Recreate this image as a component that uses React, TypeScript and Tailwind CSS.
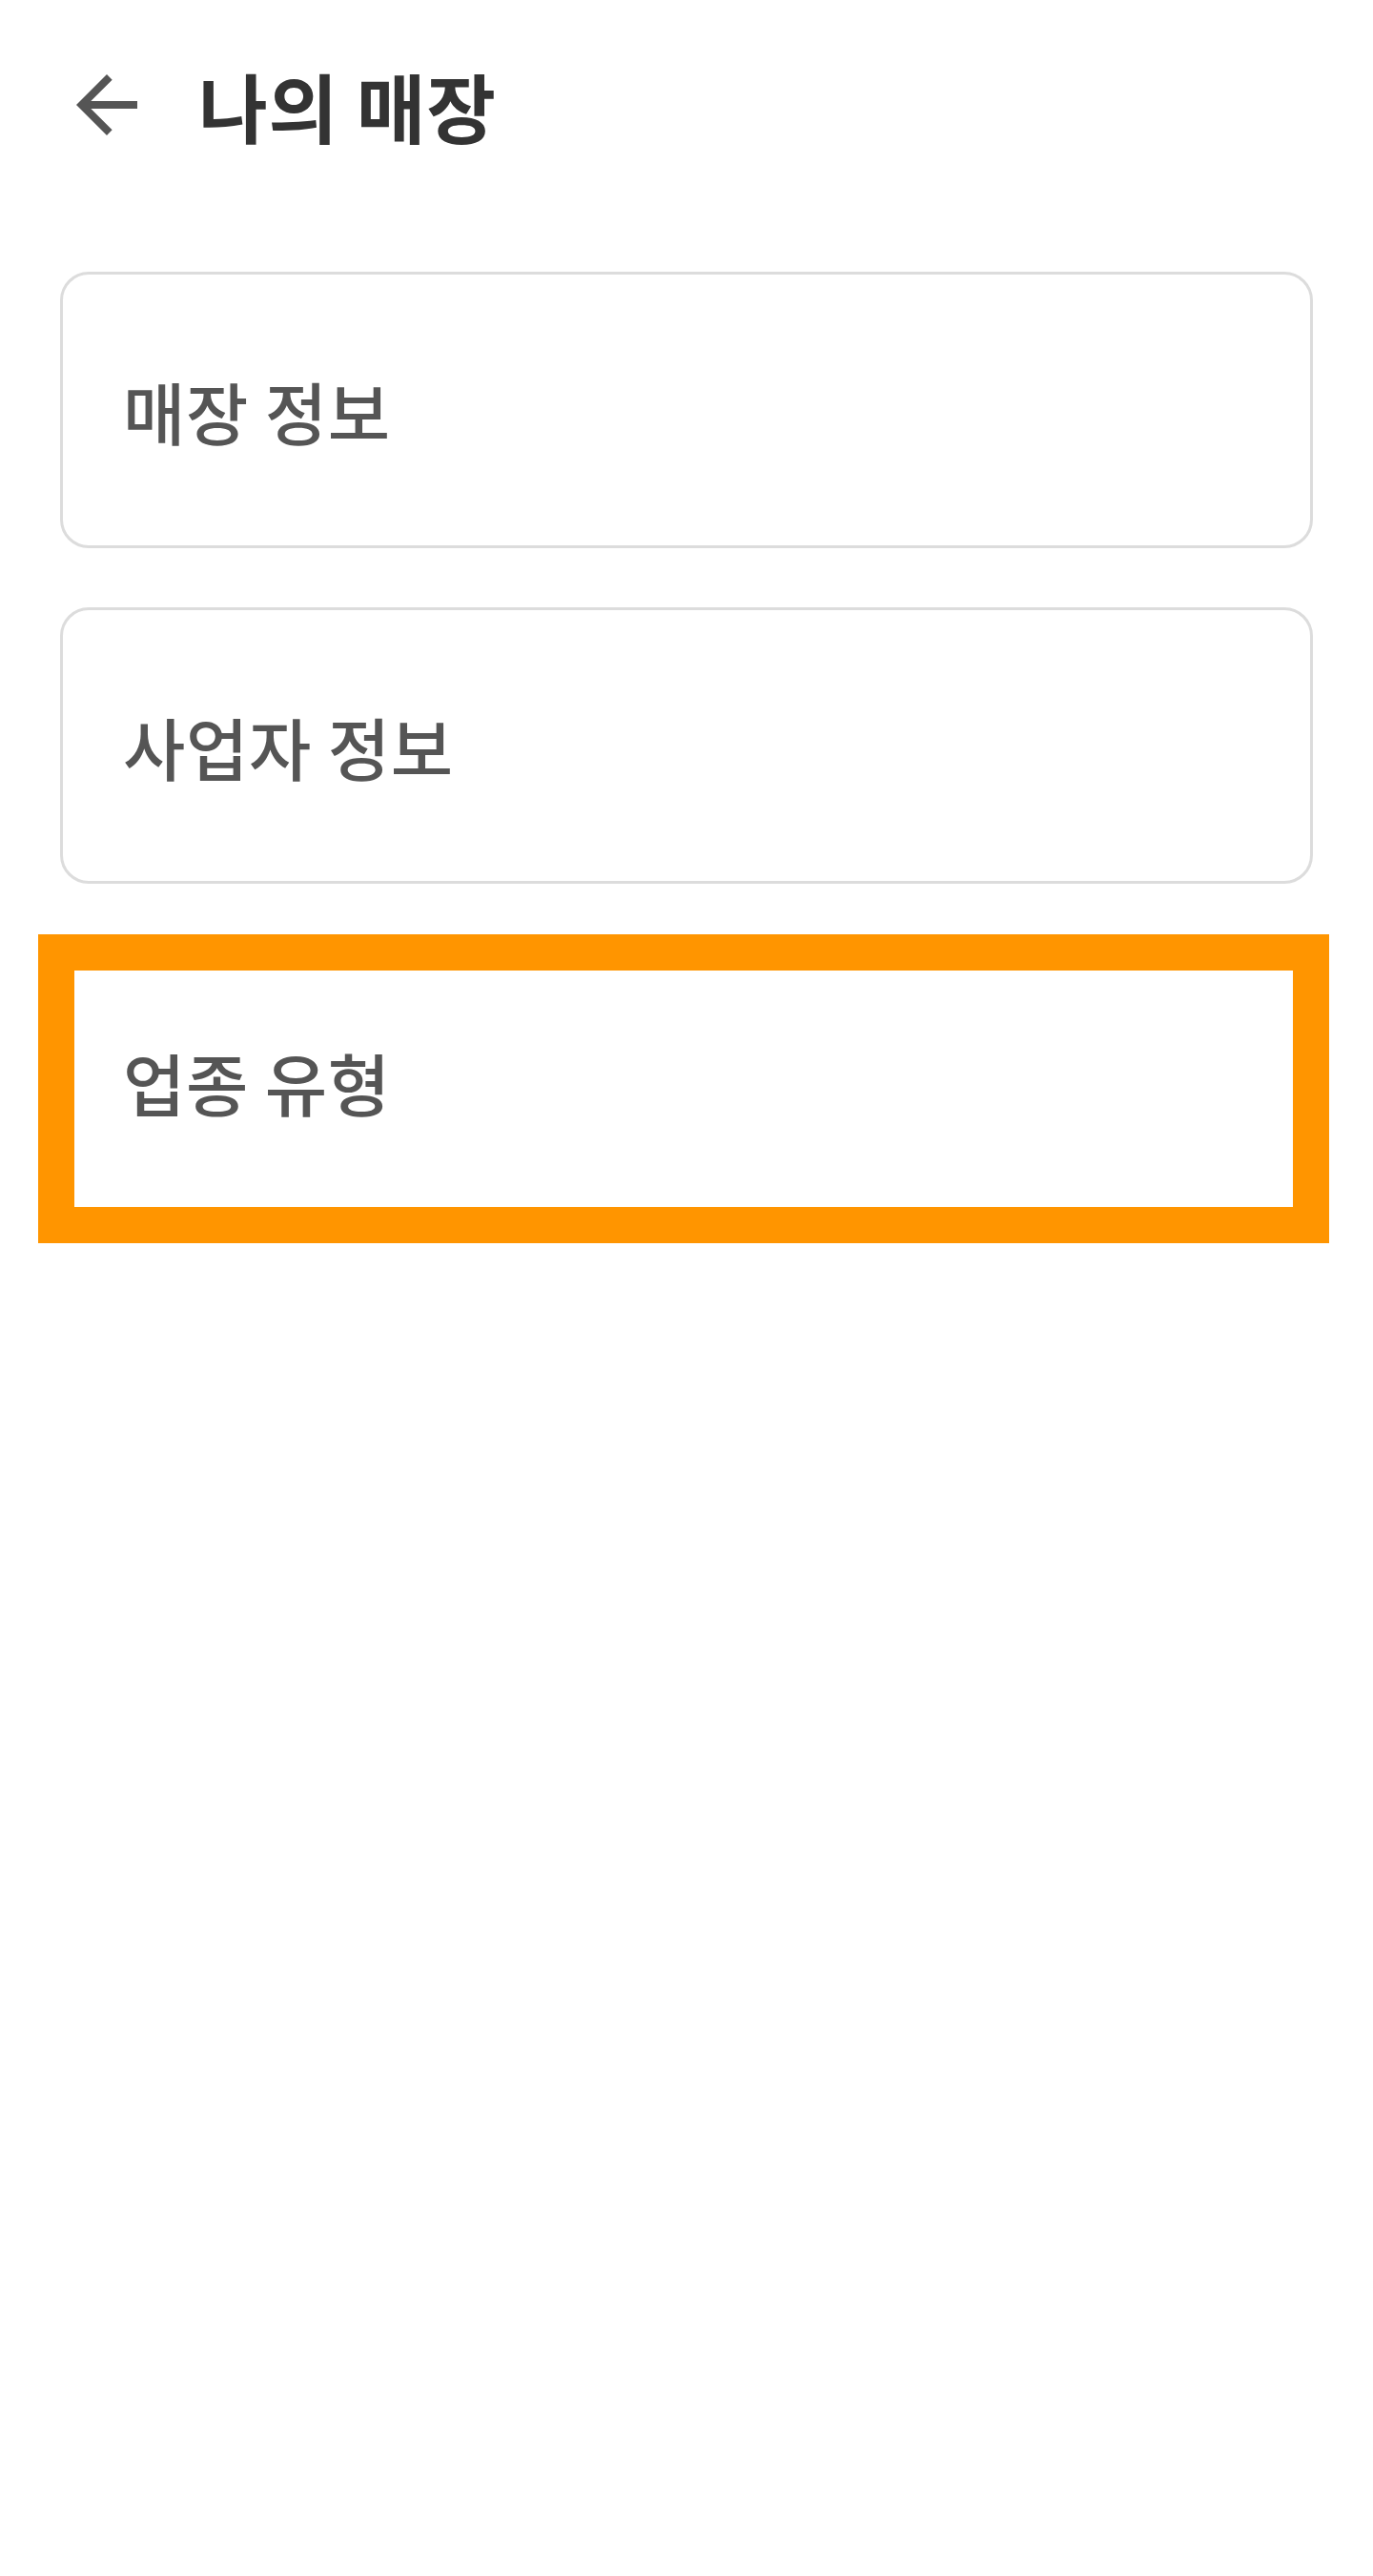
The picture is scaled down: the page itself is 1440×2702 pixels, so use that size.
import React from "react";

const font = { fontFamily: '"Noto Sans CJK KR", "Noto Sans", sans-serif' };

function Card({ label }: { label: string }) {
  return (
    <div className="flex h-[290px] w-full items-center rounded-[30px] border-[3px] border-[#dcdcdc] bg-white pl-[63px]">
      <span className="text-[71px] font-medium leading-none tracking-[0.01em] text-[#555555]">{label}</span>
    </div>
  );
}

export default function App() {
  return (
    <div className="min-h-[2702px] w-full bg-white" style={font}>
      <header className="flex items-center pl-[64px] pt-[62px]">
        <svg width="96" height="96" viewBox="0 0 24 24" aria-hidden="true">
          <path
            fill="#555555"
            d="M20 11H7.83l5.59-5.59L12 4l-8 8 8 8 1.41-1.41L7.83 13H20v-2z"
          />
        </svg>
        <h1 className="ml-[48px] text-[79px] font-bold leading-none tracking-[0.01em] text-[#333333]">나의 매장</h1>
      </header>

      <main className="mt-[127px] flex flex-col gap-[62px] px-[63px]">
        <Card label="매장 정보" />
        <Card label="사업자 정보" />
        <div className="relative">
          <Card label="업종 유형" />
          <div className="pointer-events-none absolute -bottom-[25px] -left-[23px] -right-[17px] -top-[9px] border-[38px] border-[#ff9500]" />
        </div>
      </main>
    </div>
  );
}
